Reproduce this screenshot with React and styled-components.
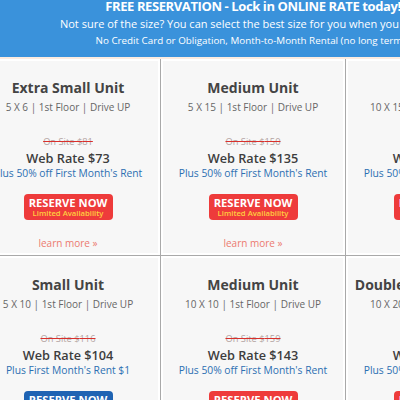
import React from "react";
import styled, { createGlobalStyle } from "styled-components";

const GlobalStyle = createGlobalStyle`
  html, body {
    margin: 0;
    padding: 0;
    overflow: hidden;
    background: #f7f7f7;
    font-family: "Open Sans", "Liberation Sans", sans-serif;
  }
`;

const Page = styled.div`
  width: 760px;
  margin-left: -24px;
`;

const Banner = styled.div`
  background: #3a92db;
  color: #fff;
  height: 57px;
  width: 564px;
  padding-right: 196px;
  box-sizing: content-box;
  border-bottom: 2px solid #fcece0;
  display: flex;
  flex-direction: column;
  align-items: center;
  white-space: nowrap;
`;

const BannerTitle = styled.div`
  font-weight: 700;
  font-size: 13px;
  letter-spacing: -0.4px;
  line-height: 12px;
  margin-right: 10px;
`;

const BannerLine = styled.div`
  font-size: ${p => p.size}px;
  line-height: ${p => p.lh}px;
  margin-top: ${p => p.top}px;
  margin-left: ${p => p.shift || 0}px;
`;

const Grid = styled.div`
  display: grid;
  grid-template-columns: repeat(4, 184px);
  grid-auto-rows: 196px;
  gap: 1px;
  background: #a9a9a9;
`;

const Card = styled.div`
  background: #f7f7f7;
  box-shadow: inset 0 0 0 2px #fff;
  display: flex;
  flex-direction: column;
  align-items: center;
  padding-top: 18px;
  white-space: nowrap;
`;

const Title = styled.div`
  font-weight: 700;
  font-size: 14px;
  line-height: 22px;
  color: #444;
`;

const Size = styled.div`
  margin-top: 1px;
  font-size: 10px;
  line-height: 14px;
  color: #666;
`;

const OnSite = styled.div`
  margin-top: 22px;
  font-size: 9.3px;
  line-height: 12px;
  color: #b3a3a1;
  text-decoration: line-through;
  text-decoration-color: #d9302c;
`;

const WebRate = styled.div`
  margin-top: 1px;
  font-weight: 600;
  font-size: 12.7px;
  line-height: 18px;
  color: #3d3d3d;
`;

const Promo = styled.div`
  font-size: 10.3px;
  line-height: 12px;
  color: #2c6fb2;
`;

const Reserve = styled.button`
  margin-top: 15px;
  width: 89px;
  height: 26px;
  border: none;
  border-radius: 4px;
  background: ${p => (p.blue ? "#1f63b3" : "#ee3b3b")};
  color: #fff;
  display: flex;
  flex-direction: column;
  align-items: center;
  justify-content: center;
  padding: 0;
  font-family: inherit;
`;

const ReserveMain = styled.span`
  font-weight: 700;
  font-size: 11.2px;
  line-height: 12px;
`;

const ReserveSub = styled.span`
  font-weight: 600;
  font-size: 7.7px;
  line-height: 9px;
  color: #ffcf3f;
`;

const LearnMore = styled.a`
  margin-top: 16px;
  font-size: 10px;
  line-height: 14px;
  color: #ec7a70;
  text-decoration: none;
`;

const units = [
  { name: "Extra Small Unit", size: "5 X 6", site: 81, web: 73, promo: "Plus 50% off First Month's Rent" },
  { name: "Medium Unit", size: "5 X 15", site: 150, web: 135, promo: "Plus 50% off First Month's Rent" },
  { name: "Large Unit", size: "10 X 15", site: 205, web: 185, promo: "Plus 50% off First Month's Rent" },
  { name: "Large Unit", size: "10 X 20", site: 240, web: 216, promo: "Plus 50% off First Month's Rent" },
  { name: "Small Unit", size: "5 X 10", site: 116, web: 104, promo: "Plus First Month's Rent $1", blue: true },
  { name: "Medium Unit", size: "10 X 10", site: 159, web: 143, promo: "Plus 50% off First Month's Rent" },
  { name: "Double Extra Large Unit", size: "10 X 20", site: 262, web: 236, promo: "Plus 50% off First Month's Rent" },
  { name: "Parking Space", size: "10 X 30", site: 120, web: 108, promo: "Plus 50% off First Month's Rent" },
];

export default function App() {
  return (
    <Page>
      <GlobalStyle />
      <Banner>
        <BannerTitle>FREE RESERVATION - Lock in ONLINE RATE today!</BannerTitle>
        <BannerLine size={11} lh={14} top={5}>
          Not sure of the size? You can select the best size for you when you come visit.
        </BannerLine>
        <BannerLine size={9.8} lh={12} top={4} shift={46}>
          No Credit Card or Obligation, Month-to-Month Rental (no long term commitment)
        </BannerLine>
      </Banner>
      <Grid>
        {units.map((u, i) => (
          <Card key={i}>
            <Title>{u.name}</Title>
            <Size>{u.size} | 1st Floor | Drive UP</Size>
            <OnSite>On Site ${u.site}</OnSite>
            <WebRate>Web Rate ${u.web}</WebRate>
            <Promo>{u.promo}</Promo>
            <Reserve blue={u.blue}>
              <ReserveMain>RESERVE NOW</ReserveMain>
              <ReserveSub>Limited Availability</ReserveSub>
            </Reserve>
            <LearnMore href="#">learn more »</LearnMore>
          </Card>
        ))}
      </Grid>
    </Page>
  );
}
